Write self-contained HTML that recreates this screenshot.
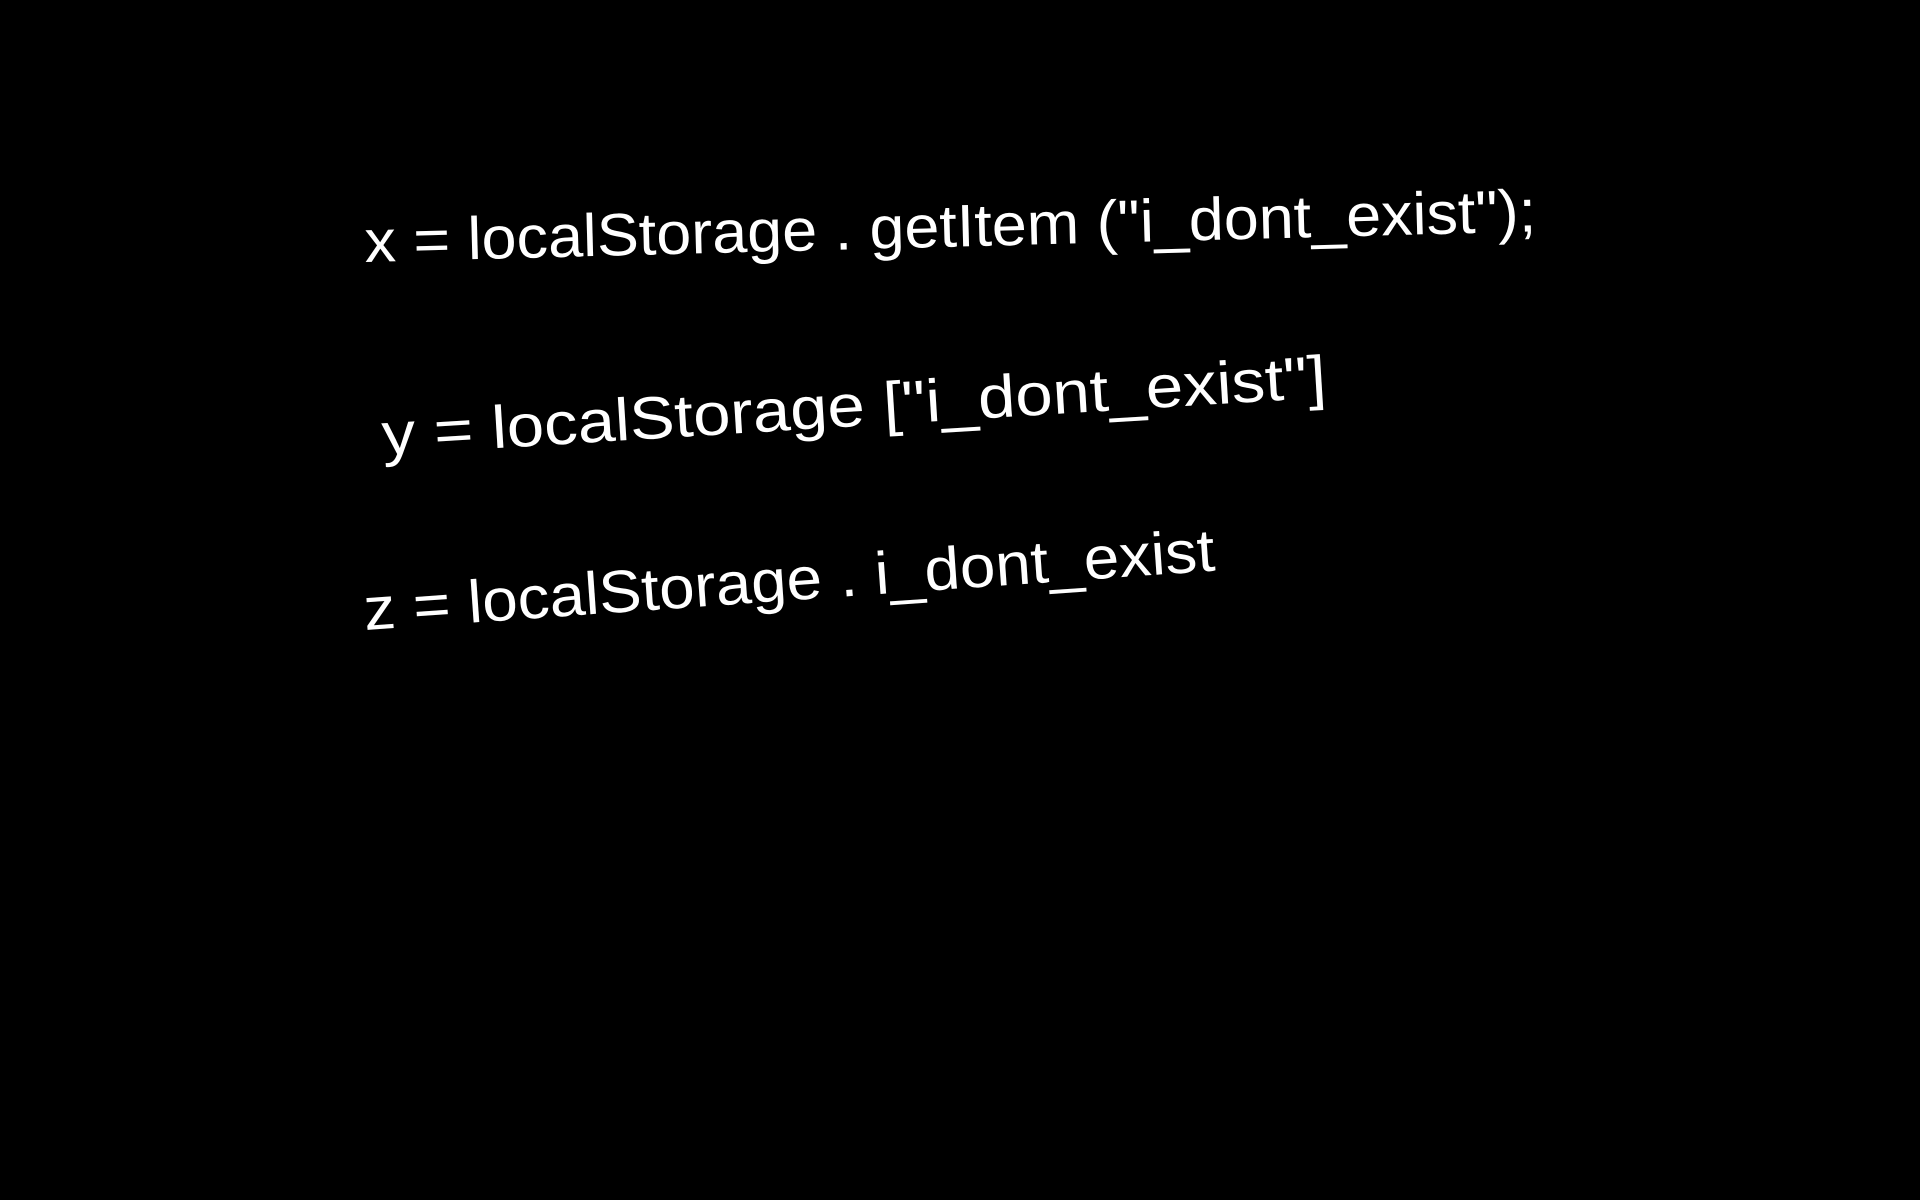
<!DOCTYPE html>
<html><head><meta charset="utf-8"><style>
html,body{margin:0;padding:0;background:#000;width:1920px;height:1200px;overflow:hidden}
svg{display:block}
text{font-family:"Liberation Sans",sans-serif;fill:#fff;font-size:60px}
</style></head><body>
<svg width="1920" height="1200" viewBox="0 0 1920 1200">
<text x="365" y="262" textLength="1172" lengthAdjust="spacingAndGlyphs" transform="rotate(-1.5 365 262)">x = localStorage . getItem ("i_dont_exist");</text>
<text x="383" y="455" textLength="946" lengthAdjust="spacingAndGlyphs" transform="rotate(-3.5 383 455)">y = localStorage ["i_dont_exist"]</text>
<text x="365" y="630" textLength="853" lengthAdjust="spacingAndGlyphs" transform="rotate(-4 365 630)">z = localStorage . i_dont_exist</text>
</svg>
</body></html>
